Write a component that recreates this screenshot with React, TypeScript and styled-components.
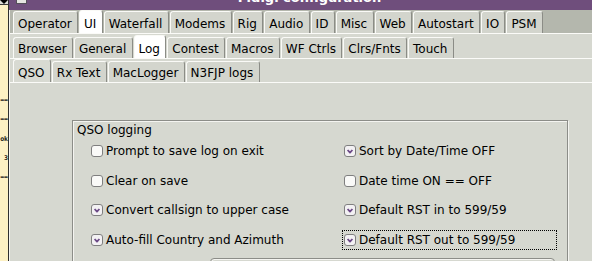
import styled, { createGlobalStyle } from "styled-components";

const GlobalStyle = createGlobalStyle`
  html, body {
    margin: 0;
    padding: 0;
  }
  body {
    width: 592px;
    height: 261px;
    overflow: hidden;
    background: #fdf1c4;
    font-family: "DejaVu Sans", "Liberation Sans", sans-serif;
    font-size: 12px;
    color: #000;
  }
`;

const Screen = styled.div`
  display: flex;
  width: 592px;
  height: 261px;
  overflow: hidden;
`;

/* the terminal window peeking out behind the dialog */
const Backdrop = styled.div`
  flex: none;
  width: 8px;
  display: flex;
  flex-direction: column;
  overflow: hidden;
  background: #fdf1c4;
`;

const BackdropBar = styled.div`
  flex: none;
  height: 4px;
  background: #dcdcd6;
  border-bottom: 1px solid #3a3a3a;
  display: flex;
  justify-content: flex-end;
`;

const BackdropLines = styled.div`
  padding-top: 86px;
  display: flex;
  flex-direction: column;
`;

const BackdropLine = styled.div`
  height: 19.25px;
  line-height: 19px;
  display: flex;
  justify-content: flex-end;
  white-space: nowrap;
  font-family: "DejaVu Sans Mono", monospace;
  font-size: 6.5px;
  font-weight: bold;
  color: #111;
`;

const Window = styled.div`
  flex: 1;
  min-width: 0;
  display: flex;
  flex-direction: column;
  border-left: 1px solid #2f2f2f;
  background: #d6d8d0;
`;

const TitleBar = styled.div`
  flex: none;
  height: 10px;
  display: flex;
  align-items: flex-end;
  overflow: hidden;
  background: #6f4e7c;
`;

const TitleIcon = styled.div`
  flex: none;
  width: 9px;
  height: 9px;
  margin: 0 0 6px 7px;
  border: 1px solid #55505a;
  background: #e6e6e2;
`;

const TitleText = styled.div`
  flex: 1;
  margin-bottom: 5px;
  line-height: 14px;
  text-align: center;
  font-size: 13px;
  font-weight: bold;
  color: #fff;
  white-space: nowrap;
`;

const Body = styled.div`
  flex: 1;
  display: flex;
  flex-direction: column;
  border-left: 1px solid #f4f4f0;
`;

const TabBar = styled.div<{ $shade?: boolean }>`
  flex: none;
  height: 23px;
  display: flex;
  align-items: flex-end;
  gap: 1px;
  padding-left: 3px;
  background: ${(p) => (p.$shade ? "#b4b7ad" : "transparent")};
`;

const Tab = styled.div<{ $active?: boolean; $inset: number; $activeBg?: string }>`
  box-sizing: border-box;
  height: ${(p) => (p.$active ? "100%" : `calc(100% - ${p.$inset}px)`)};
  display: flex;
  align-items: flex-end;
  padding: 0 5.3px 0 4px;
  line-height: 18px;
  white-space: nowrap;
  background: ${(p) => (p.$active ? p.$activeBg ?? "#ffffff" : "#d3d5cd")};
  border: 1px solid;
  border-bottom: none;
  border-color: #fafaf7 #8b8c86 transparent #fafaf7;
  border-radius: 3px 3px 0 0;
`;

const Panel = styled.div<{ $pad?: number }>`
  flex: 1;
  display: flex;
  flex-direction: column;
  border-top: 1px solid #fbfbf8;
  padding-top: ${(p) => p.$pad ?? 0}px;
`;

const Content = styled.div`
  flex: 1;
  padding: 37px 0 0 62px;
`;

const GroupBox = styled.div`
  box-sizing: border-box;
  width: 496px;
  height: 160px;
  border: 1px solid #8c8d88;
  box-shadow: 1px 1px 0 #f4f4f0, inset 1px 1px 0 #f4f4f0;
`;

const Legend = styled.div`
  padding: 1px 0 0 4px;
  line-height: 16px;
`;

const OptionGrid = styled.div`
  display: grid;
  grid-template-columns: 253px 215px;
  grid-auto-rows: 20px;
  row-gap: 9.67px;
  margin-top: 3px;
  padding-left: 16px;
`;

const Option = styled.label<{ $focused?: boolean }>`
  box-sizing: border-box;
  width: 215px;
  height: 20px;
  display: flex;
  align-items: center;
  gap: 3px;
  padding: 0 1px;
  line-height: 18px;
  white-space: nowrap;
  border: 1px dotted ${(p) => (p.$focused ? "#000" : "transparent")};
`;

const SubBox = styled.div`
  box-sizing: border-box;
  width: 345px;
  height: 20px;
  margin: 8px 0 0 137px;
  border: 1px solid #8c8d88;
  border-radius: 4px 4px 0 0;
  box-shadow: inset 1px 1px 0 #f4f4f0;
`;

const CheckBox = ({ checked }: { checked: boolean }) => (
  <svg width="12" height="12" viewBox="0 0 12 12" style={{ flex: "none" }}>
    <rect x="0.5" y="0.5" width="11" height="11" rx="2.5" fill={checked ? "#f3f1f3" : "#fafaf8"} stroke="#7f7f7f" />
    {checked && (
      <polyline points="3.6,5 6,7.6 8.4,5" fill="none" stroke="#6c4a87" strokeWidth="1.8" strokeLinejoin="round" />
    )}
  </svg>
);

const topTabs = ["Operator", "UI", "Waterfall", "Modems", "Rig", "Audio", "ID", "Misc", "Web", "Autostart", "IO", "PSM"];
const uiTabs = ["Browser", "General", "Log", "Contest", "Macros", "WF Ctrls", "Clrs/Fnts", "Touch"];
const logTabs = ["QSO", "Rx Text", "MacLogger", "N3FJP logs"];

const options = [
  { label: "Prompt to save log on exit", checked: false },
  { label: "Sort by Date/Time OFF", checked: true },
  { label: "Clear on save", checked: false },
  { label: "Date time ON == OFF", checked: false },
  { label: "Convert callsign to upper case", checked: true },
  { label: "Default RST in to 599/59", checked: true },
  { label: "Auto-fill Country and Azimuth", checked: true },
  { label: "Default RST out to 599/59", checked: true, focused: true },
];

export default function App() {
  return (
    <Screen>
      <GlobalStyle />
      <Backdrop>
        <BackdropBar>
          <svg width="8" height="4" viewBox="0 0 8 4">
            <polygon points="0,0 8,0 4,4" fill="#000" />
          </svg>
        </BackdropBar>
        <BackdropLines>
          <BackdropLine>==</BackdropLine>
          <BackdropLine>==</BackdropLine>
          <BackdropLine>ok</BackdropLine>
          <BackdropLine>3</BackdropLine>
          <BackdropLine>==</BackdropLine>
        </BackdropLines>
      </Backdrop>

      <Window>
        <TitleBar>
          <TitleIcon />
          <TitleText>Fldigi configuration</TitleText>
        </TitleBar>

        <Body>
          <TabBar $shade>
            {topTabs.map((t) => (
              <Tab key={t} $inset={1} $active={t === "UI"}>
                {t}
              </Tab>
            ))}
          </TabBar>

          <Panel $pad={1}>
            <TabBar>
              {uiTabs.map((t) => (
                <Tab key={t} $inset={2} $active={t === "Log"}>
                  {t}
                </Tab>
              ))}
            </TabBar>

            <Panel>
              <TabBar>
                {logTabs.map((t) => (
                  <Tab key={t} $inset={2} $active={t === "QSO"} $activeBg="#d8dad2">
                    {t}
                  </Tab>
                ))}
              </TabBar>

              <Panel>
                <Content>
                  <GroupBox>
                    <Legend>QSO logging</Legend>
                    <OptionGrid>
                      {options.map((o) => (
                        <Option key={o.label} $focused={o.focused}>
                          <CheckBox checked={o.checked} />
                          {o.label}
                        </Option>
                      ))}
                    </OptionGrid>
                    <SubBox />
                  </GroupBox>
                </Content>
              </Panel>
            </Panel>
          </Panel>
        </Body>
      </Window>
    </Screen>
  );
}
